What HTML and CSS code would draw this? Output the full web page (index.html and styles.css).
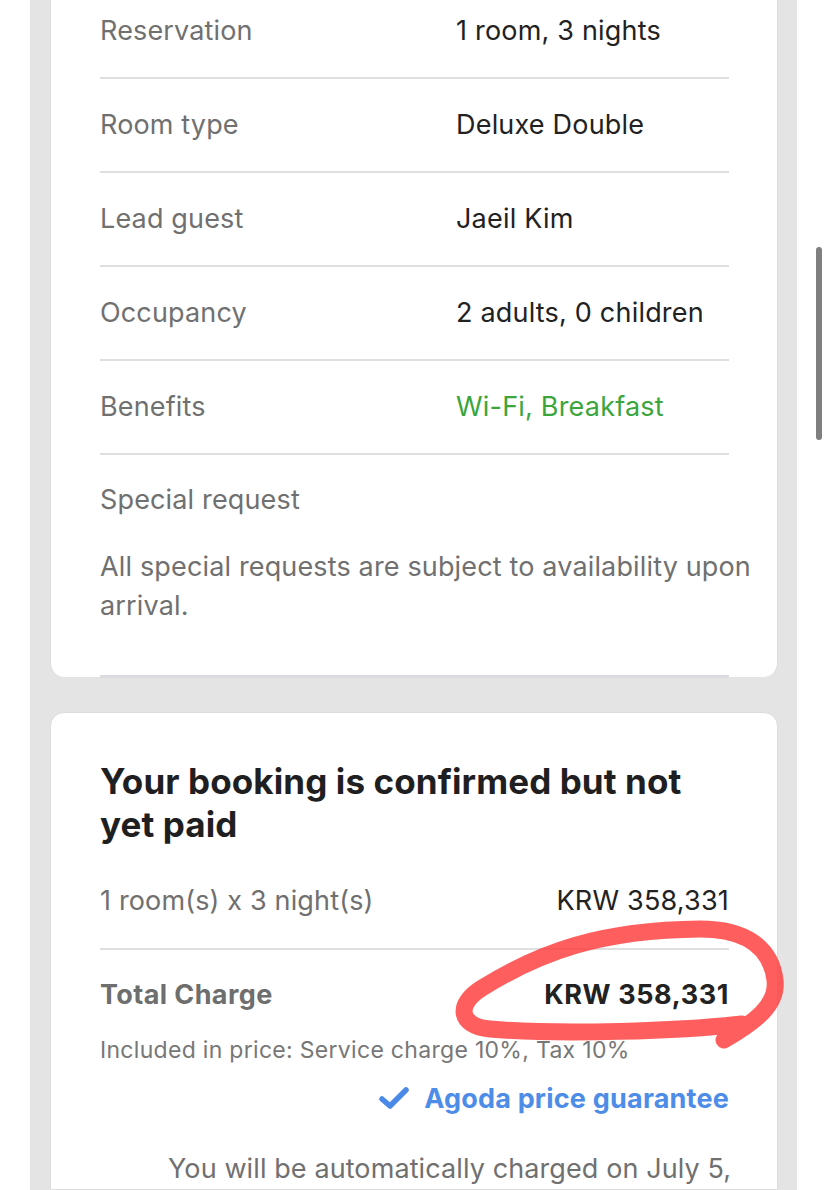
FILE: index.html
```html
<!DOCTYPE html>
<html lang="en">
<head>
<meta charset="utf-8">
<title>Booking details</title>
<link rel="stylesheet" href="styles.css">
</head>
<body>
<div class="column">
  <section class="card card-details">
    <div class="row"><span class="label">Reservation</span><span class="value">1 room, 3 nights</span></div>
    <div class="row"><span class="label">Room type</span><span class="value">Deluxe Double</span></div>
    <div class="row"><span class="label">Lead guest</span><span class="value">Jaeil Kim</span></div>
    <div class="row"><span class="label">Occupancy</span><span class="value">2 adults, 0 children</span></div>
    <div class="row"><span class="label">Benefits</span><span class="value green">Wi-Fi, Breakfast</span></div>
    <div class="special">
      <div class="label">Special request</div>
      <p class="special-note">All special requests are subject to availability upon arrival.</p>
    </div>
  </section>

  <section class="card card-pay">
    <h2 class="headline">Your booking is confirmed but not yet paid</h2>
    <div class="price-row first">
      <span class="label">1 room(s) x 3 night(s)</span>
      <span class="value">KRW 358,331</span>
    </div>
    <div class="price-row total">
      <span class="total-label">Total Charge</span>
      <span class="total-value">KRW 358,331</span>
    </div>
    <p class="included">Included in price: Service charge 10%, Tax 10%</p>
    <div class="guarantee">
      <svg class="check" width="30" height="24" viewBox="0 0 30 24"><path d="M3 12 L11 19 L27 3" fill="none" stroke="#4a8ae6" stroke-width="5.5" stroke-linecap="round" stroke-linejoin="round"/></svg>
      <span>Agoda price guarantee</span>
    </div>
    <p class="auto-charge">You will be automatically charged on July 5,</p>
  </section>
</div>

<div class="scrollbar"></div>

<svg class="scribble" width="828" height="1190" viewBox="0 0 828 1190">
  <path d="M 742 1024 C 680 1031, 560 1035, 490 1029 C 458 1026, 456 1004, 482 988 C 540 952, 600 930, 700 929 C 746 929, 771 948, 775 980 C 778 1005, 755 1022, 724 1040" fill="none" stroke="#ff3b3b" stroke-opacity="0.82" stroke-width="17" stroke-linecap="round" stroke-linejoin="round"/>
</svg>
</body>
</html>
```

FILE: styles.css
```css
* { box-sizing: border-box; }

html, body {
  margin: 0;
  padding: 0;
  background: #ffffff;
  height: 1190px;
  overflow: hidden;
  font-family: "Inter", "Roboto", "Liberation Sans", sans-serif;
}

.column {
  margin: 0 31px 0 30px;
  height: 1190px;
  background: #e4e4e4;
  padding: 0 19px 0 20px;
  display: flex;
  flex-direction: column;
  gap: 35px;
}

.card {
  background: #ffffff;
  border-radius: 14px;
  border: 1px solid #dcdcdc;
  padding: 0 48px 0 49px;
}

.card-details {
  margin-top: -15px;
  border-top: none;
  border-top-left-radius: 0;
  border-top-right-radius: 0;
  padding-bottom: 0;
  border-bottom: none;
}

.row {
  display: flex;
  align-items: center;
  height: 94px;
  border-bottom: 2px solid #dfdfdf;
  padding-bottom: 2px;
}

.label {
  color: #707070;
  font-size: 27px;
  letter-spacing: 0.15px;
}

.row .label {
  width: 356px;
  flex: none;
}

.value {
  color: #222222;
  font-size: 27px;
  letter-spacing: 0.2px;
}

.green { color: #3ca53c; }

.special {
  padding: 25px 0 50px;
  border-bottom: 3px solid #dcdce0;
  margin-bottom: -1px;
}

.special .label {
  line-height: 40px;
}

.special-note {
  margin: 27px 0 0;
  color: #707070;
  font-size: 27px;
  letter-spacing: 0.15px;
  line-height: 39px;
  margin-right: -24px;
}

.card-pay {
  padding-top: 47px;
  flex: 1;
  border-bottom-left-radius: 0;
  border-bottom-right-radius: 0;
}

.headline {
  margin: 0;
  font-size: 35px;
  line-height: 43px;
  font-weight: 700;
  color: #1f1f22;
  letter-spacing: 0.1px;
  padding-right: 20px;
}

.price-row {
  display: flex;
  justify-content: space-between;
  align-items: center;
  line-height: 30px;
}

.price-row.first {
  padding: 40px 0 32px;
  border-bottom: 2px solid #dfdfdf;
}

.price-row.total {
  padding-top: 30px;
}

.total-label {
  font-size: 27px;
  font-weight: 700;
  color: #6e6e6e;
  letter-spacing: 0.4px;
}

.total-value {
  font-size: 27px;
  font-weight: 700;
  color: #222222;
  letter-spacing: 0.6px;
}

.included {
  margin: 25px 0 0;
  font-size: 23px;
  letter-spacing: 0.3px;
  line-height: 30px;
  color: #777777;
  white-space: nowrap;
}

.guarantee {
  margin-top: 17px;
  display: flex;
  justify-content: flex-end;
  align-items: center;
  gap: 15px;
  line-height: 34px;
  font-size: 27px;
  font-weight: 700;
  letter-spacing: 0.2px;
  color: #4d8de8;
}

.check { display: block; }

.auto-charge {
  margin: 33px 0 0;
  padding-left: 68px;
  font-size: 27px;
  letter-spacing: 0.1px;
  line-height: 39px;
  color: #707070;
  white-space: nowrap;
}

.scrollbar {
  position: absolute;
  left: 816px;
  top: 247px;
  width: 6px;
  height: 193px;
  border-radius: 3px;
  background: #7f7f7f;
}

.scribble {
  position: absolute;
  left: 0;
  top: 0;
  pointer-events: none;
}
```
